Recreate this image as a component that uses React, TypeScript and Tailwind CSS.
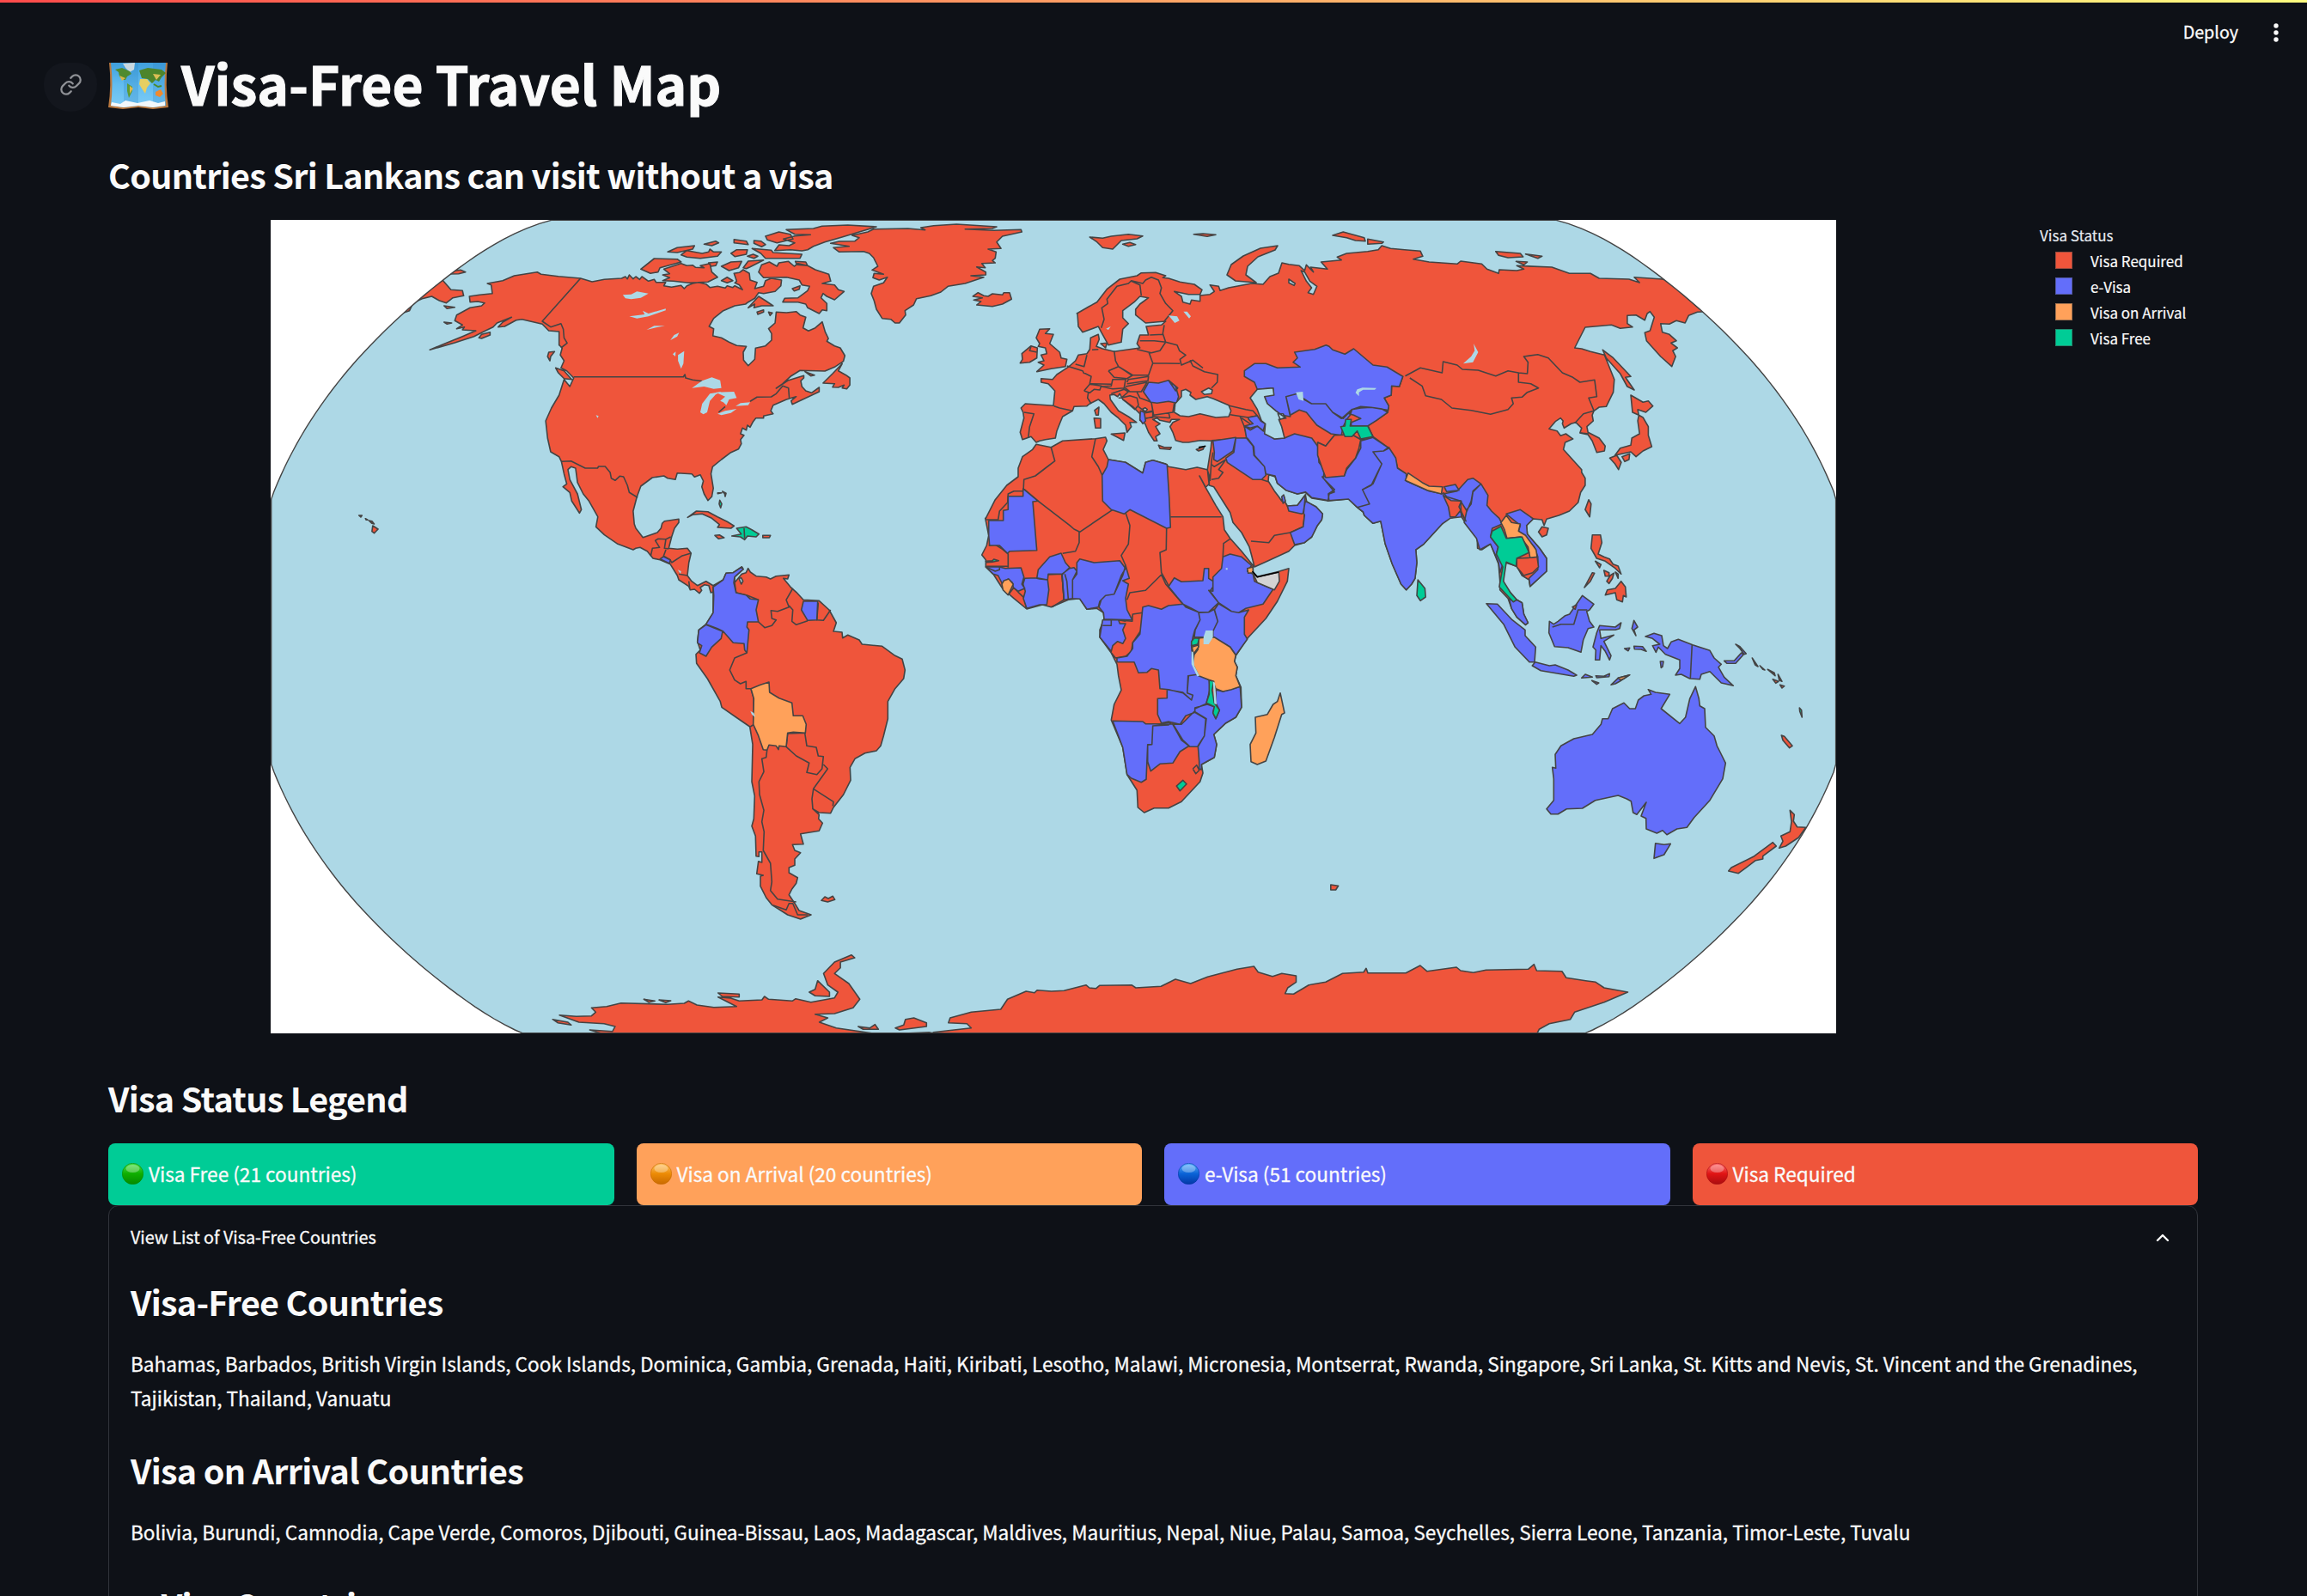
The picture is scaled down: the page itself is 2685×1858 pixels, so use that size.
import React from "react";
import { Link, ChevronUp } from "lucide-react";

type Frame = [number, number, number, number];

/* Tile frames: origin x, origin y, horizontal unit, vertical unit. */
const T = 1 / 3;
const frames: Record<string, Frame> = {
  A: [315, 250, 700 / 1568, T],
  B: [900, 250, T, T],
  C: [1130, 330, T, T],
  D: [1500, 250, 640 / 1568, T],
  E: [740, 560, T, T],
  F: [1130, 600, T, T],
  G: [1650, 560, T, T],
  H: [600, 1000, 1540 / 1568, T],
  P: [0, 0, 1, 1],
};

function project(src: string): string {
  const out: string[] = [];
  let f = frames.P;
  let x: number | null = null;
  for (const tok of src.split(/[\s,]+/)) {
    if (!tok) continue;
    if (frames[tok]) {
      f = frames[tok];
      continue;
    }
    const n = parseFloat(tok);
    if (x === null) x = n;
    else {
      out.push(`${(f[0] + x * f[2]).toFixed(1)} ${(f[1] + n * f[3]).toFixed(1)}`);
      x = null;
    }
  }
  return "M" + out.join("L");
}

/* Countries and coastlines grouped by visa status. */
const required: string[] = [
  // North and Central America
  "A 808,222 838,234 870,226 915,222 925,216 930,224 935,210 945,224 952,216 962,226 968,216 985,232 1000,226 1005,236 1030,236 1025,248 1045,253 1070,247 1078,258 1085,248 1100,240 1115,236 1135,242 1145,254 1165,250 1185,256 1190,248 1205,254 1210,248 1230,262 1222,245 1210,238 1215,232 1208,205 1222,202 1232,192 1248,205 1250,228 1268,236 1262,258 1285,250 1290,230 1305,222 1332,228 1330,248 1315,268 1285,275 1272,272 1262,292 1245,305 1238,312 1210,318 1180,335 1155,362 1143,390 1155,398 1153,423 1175,430 1195,445 1215,457 1240,460 1232,480 1233,508 1245,527 1262,505 1264,466 1290,458 1306,438 1306,415 1298,398 1315,378 1318,340 1345,342 1370,338 1380,350 1395,358 1388,395 1402,406 1420,395 1438,374 1446,410 1454,432 1450,442 1470,458 1485,465 1497,492 1493,512 1470,532 1445,546 1380,544 1355,565 1335,590 1318,606 1350,578 1390,562 1390,570 1382,580 1385,600 1395,615 1410,622 1430,603 1430,618 1360,662 1357,650 1370,635 1345,645 1310,665 1304,685 1310,695 1285,703 1285,710 1265,710 1258,722 1250,742 1243,735 1240,752 1230,745 1225,765 1234,770 1225,785 1227,800 1220,818 1200,830 1175,855 1152,880 1148,905 1154,955 1150,985 1140,998 1130,975 1124,950 1128,930 1120,908 1105,916 1098,905 1060,902 1055,925 1035,920 1025,912 995,918 965,948 955,985 945,1035 948,1080 E 0,165 25,197 75,180 88,165 92,148 100,140 150,133 150,145 135,165 125,195 115,235 145,238 180,235 193,252 185,285 180,330 195,350 215,365 245,350 270,365 305,345 275,385 262,390 255,365 240,362 225,372 230,382 222,392 205,378 190,380 185,368 150,345 145,330 120,290 85,275 60,270 40,245 15,232 0,235 A 945,1170 905,1150 870,1118 848,1090 853,1055 830,1000 815,975 800,935 795,885 783,880 775,890 780,925 800,975 810,1030 805,1042 785,1000 780,970 762,950 772,940 765,905 758,862 752,845 730,828 722,780 717,720 732,675 752,630 765,575 780,600 790,570 772,545 757,535 765,510 755,490 760,465 752,455 752,408 725,405 708,382 655,365 640,368 610,390 593,392 605,375 628,358 590,378 580,392 560,405 530,425 480,447 415,472 450,452 500,425 535,405 500,402 505,392 485,398 500,385 480,370 485,350 520,325 550,318 558,308 540,303 520,305 518,285 545,280 578,275 575,245 565,240 605,230 635,213 695,200 705,208 750,215 808,222",
  "A 1022,230 1040,220 1022,210 1040,206 1025,190 1070,170 1085,178 1100,176 1108,184 1130,185 1120,178 1145,170 1150,200 1165,218 1150,228 1140,235 1090,238 1050,232",
  "A 965,190 1000,153 1060,155 1070,165 1015,185 1010,200 990,205",
  "A 1070,140 1085,125 1125,135 1142,130 1145,120 1155,130 1175,130 1165,145 1120,152 1085,148",
  "A 1035,130 1060,115 1105,108 1100,120 1060,132",
  "A 1130,103 1160,92 1168,98 1150,108",
  "A 1208,86 1240,92 1245,104 1208,98",
  "A 1260,90 1278,92 1290,104 1280,112 1260,100",
  "A 1200,135 1215,122 1243,122 1240,138 1210,146",
  "A 1243,145 1258,138 1270,145 1260,152",
  "A 1255,118 1305,124 1310,132 1385,138 1380,152 1290,152 1278,135",
  "B 5,125 20,105 55,108 75,98 35,85 75,74 130,70 75,68 45,52 140,48 170,40 260,36 360,42 300,60 240,78 180,95 140,110 120,122 100,126 60,122",
  "A 1290,75 1325,60 1355,68 1362,85 1320,98 1295,88",
  "A 1175,180 1200,165 1228,163 1220,185 1195,195",
  "A 1232,185 1245,162 1285,158 1250,182 1240,188",
  "A 1175,230 1190,218 1205,230 1190,238",
  "A 1142,168 1165,165 1160,178 1148,180",
  "A 1272,200 1280,175 1300,165 1320,180 1325,168 1350,163 1365,180 1375,170 1400,178 1420,192 1455,208 1460,232 1438,240 1470,245 1480,262 1495,268 1470,297 1450,285 1440,275 1435,290 1450,310 1450,335 1438,332 1430,345 1400,325 1395,312 1375,305 1335,305 1340,292 1375,290 1400,265 1405,250 1385,245 1378,228 1345,218 1285,220",
  "A 1245,325 1272,285 1290,300 1310,318 1280,318 1260,325 1262,312",
  "A 1268,340 1285,332 1285,340 1270,348",
  "A 1298,340 1308,343 1302,352",
  "A 1360,258 1380,248 1378,260 1365,266",
  "A 1368,163 1395,165 1400,178 1372,175",
  "A 743,535 765,545 785,575 765,572 750,552",
  "A 725,480 740,478 730,495 728,510 722,495",
  "A 1440,588 1465,555 1490,520 1480,545 1500,560 1510,570 1510,595 1502,608 1490,605 1495,595 1480,603 1465,602 1470,590",
  "A 1393,548 1418,560 1408,563",
  "A 452,318 480,323 460,328",
  "A 452,375 472,378 460,382",
  "A 543,430 550,418 572,410 572,420 550,432",
  "A 448,228 470,262 500,265 503,283 475,290 458,308 440,300 420,285 395,293 375,305 330,305 400,230",
  "A 465,207 480,196 495,193 508,200 490,206",
  "A 340,345 350,335 358,325 368,318 362,335",
  "A 1087,1057 1110,1035 1140,1037 1165,1055 1190,1072 1208,1087 1200,1095 1165,1092 1170,1082 1150,1060 1125,1045 1100,1048",
  "A 1158,1120 1170,1118 1182,1128 1168,1132",
  "A 1283,1120 1303,1120 1300,1128 1283,1128",
  "A 266,1086 280,1098 270,1112 264,1106",
  "A 256,1068 264,1070 270,1080 264,1078",
  "A 230,1050 238,1050 235,1056",
  "A 247,1061 253,1066 249,1066",
  // South America
  "E 270,370 305,345 315,322 340,320 370,300 375,308 345,335 345,355 370,325 385,320 392,305 400,318 420,332 455,335 470,342 490,332 535,328 530,342 515,340 540,370 560,388 585,415 640,418 675,450 700,495 690,525 720,528 722,548 740,538 780,555 790,570 860,577 905,610 930,622 940,660 935,690 905,725 880,770 880,830 865,890 855,925 840,942 800,950 765,970 748,1000 750,1045 725,1095 690,1140 680,1160 640,1158 618,1145 640,1165 638,1180 652,1195 640,1222 575,1232 585,1268 547,1270 555,1290 575,1298 555,1320 555,1342 535,1350 535,1368 565,1385 560,1405 545,1425 535,1445 555,1475 570,1500 612,1515 575,1530 530,1515 475,1480 455,1455 435,1415 435,1380 445,1377 422,1372 428,1328 440,1332 440,1295 430,1295 430,1312 420,1310 418,1240 405,1205 412,1180 415,1100 405,1050 408,920 398,858 350,825 300,790 295,770 250,690 212,637 210,605 225,590 215,560 220,520 245,500 270,460 270,400",
  "E 648,1465 660,1452 672,1458 688,1450 695,1462 670,1470",
  // Greenland, Iceland and the Arctic islands
  "B 200,100 230,93 285,92 300,80 275,72 330,60 350,50 470,48 530,53 515,45 560,38 640,33 780,42 765,48 670,50 770,55 865,52 868,60 800,75 780,95 795,118 750,120 778,130 775,152 765,160 775,168 728,170 740,185 710,182 742,200 742,210 690,213 735,218 715,225 670,240 610,250 585,270 550,283 500,293 490,315 460,335 462,350 440,378 425,378 410,365 380,362 360,330 352,300 342,275 350,250 385,238 398,218 370,228 348,220 352,205 385,208 345,193 365,180 350,150 335,135 315,128 230,130 210,115 265,110",
  "B 697,285 715,272 735,283 750,285 765,276 800,280 805,272 825,272 832,295 800,312 765,320 710,315 725,303 700,298 730,290",
  "B 1105,78 1150,82 1180,75 1240,68 1290,74 1270,84 1215,90 1195,110 1185,120 1150,115 1130,95",
  "B 1220,103 1245,97 1265,104 1240,110",
  "B 1468,68 1500,66 1545,70 1515,76",
  "P 1428,320 1433,308 1447,298 1467,289 1487,286 1484,291 1464,299 1452,310 1450,320 1462,329 1438,327",
  "D 125,72 155,60 215,80 218,92 190,90 165,80",
  "D 225,85 270,95 265,100 225,103",
  "D 590,128 660,135 668,147 625,150 598,142",
  "D 675,137 722,145 710,152",
  "D 648,163 680,165 670,175",
  // Eurasia
  "B 1060,345 1100,322 1130,305 1165,260 1210,225 1270,213 1285,203 1335,202 1370,213 1360,220 1380,222 1420,235 1470,243 1497,262 1490,278 1450,278 1400,268 1425,285 1430,305 1455,312 1460,298 C 800,62 800,42 835,38 850,28 835,5 865,10 870,25 900,15 980,0 P 1470,331 1478,322 1488,318 1492,306 D 0,173 30,178 45,195 50,175 70,200 62,183 110,190 92,165 150,158 138,148 165,135 225,128 255,122 265,108 290,118 330,122 375,127 382,145 355,155 400,165 480,172 490,162 550,172 565,190 598,205 600,192 650,195 670,190 650,178 750,183 800,205 860,205 885,222 970,225 1000,237 985,218 1065,225 1120,240 1190,338 1165,340 1140,352 1130,378 1105,370 1085,382 1060,380 1065,410 1085,418 1105,440 1090,448 1108,465 1095,475 1103,495 1092,530 1060,495 1020,440 1015,412 1030,405 1042,358 1030,338 1022,345 1015,368 990,350 965,352 965,380 980,392 945,397 920,385 845,393 815,465 835,468 860,478 900,490 910,520 928,575 925,620 905,670 885,672 870,685 865,700 868,720 850,740 853,760 885,780 902,808 900,825 878,830 865,790 853,768 830,762 835,745 818,725 805,730 785,745 780,730 782,720 775,710 760,722 742,748 765,755 775,772 790,765 810,783 788,795 783,820 805,850 835,890 835,900 845,920 845,945 832,970 825,1005 800,1035 770,1050 735,1063 728,1085 722,1065 697,1062 678,1085 680,1115 715,1165 735,1200 735,1245 688,1298 685,1275 665,1260 650,1228 618,1215 610,1260 612,1290 632,1320 650,1345 665,1355 670,1395 682,1425 675,1432 650,1405 635,1375 625,1340 602,1310 602,1280 598,1220 575,1150 550,1170 538,1165 537,1130 520,1095 500,1070 490,1050 475,1055 440,1065 437,1080 385,1150 362,1170 365,1215 360,1270 350,1290 335,1310 320,1290 295,1220 275,1150 262,1070 240,1078 215,1050 212,1038 195,1022 170,993 110,1000 C 1250,760 1190,750 1168,730 1140,735 1100,722 1070,698 1062,675 1040,668 1038,690 1060,725 1075,745 1085,760 1092,740 1098,765 1105,777 1140,775 1168,738 1172,762 1205,780 1228,805 1225,825 1210,845 1190,885 1165,905 1130,915 1110,935 1035,970 990,990 980,950 972,920 945,870 915,835 905,800 870,745 848,710 832,705 826,650 838,575 840,550 800,548 760,555 740,555 715,548 705,520 695,500 705,485 728,475 700,475 695,485 660,478 650,470 635,475 660,490 645,500 660,525 645,535 650,550 640,550 620,520 608,490 590,478 590,455 565,430 530,405 520,385 512,395 500,388 485,390 487,405 515,445 550,465 578,485 555,485 560,500 545,520 540,495 515,470 490,450 465,420 445,405 415,420 405,428 360,430 355,445 320,465 310,490 300,515 295,540 260,545 240,550 228,555 210,535 180,545 172,520 185,470 182,450 175,435 190,420 288,427 293,375 270,350 245,345 245,332 285,335 300,318 335,295 345,288 365,270 375,250 405,245 415,230 418,190 445,178 448,195 438,220 460,228 500,238 590,225 580,210 590,180 620,180 612,150 665,145 680,132 610,138 575,110 575,90 590,72 620,50 590,45 570,65 530,95 530,120 550,140 530,160 525,205 480,215 455,170 445,150 390,170 375,150 372,105",
  "B 930,400 965,398 950,415 978,418 965,450 1000,480 1005,500 1025,505 1020,530 970,538 920,548 945,525 925,515 945,510 935,490 955,485 950,465 925,460 930,450 918,430",
  "B 862,518 870,505 868,485 900,458 922,465 920,500 895,515",
  "B 1120,710 1143,712 1143,745 1125,745",
  "B 1122,683 1137,672 1135,700 1127,700",
  "B 1180,766 1228,762 1223,788",
  "B 1345,805 1365,812 1390,812 1385,820 1350,817",
  "B 1143,450 1165,448 1160,465",
  "C 787,580 815,570 810,580 795,585",
  "D 998,700 1010,708 1025,740 1025,770 1035,810 1010,825 990,845 975,828 930,840 945,815 975,805 978,780 1000,765 995,720",
  "D 975,630 1010,655 1025,650 1038,668 1018,690 995,680 998,700 980,690",
  "D 915,850 935,840 948,865 940,890 930,870",
  "D 950,845 972,835 970,855 958,862",
  "D 895,472 925,500 975,565 960,568 985,612 965,600 945,555 905,500",
  "D 855,995 862,1010 858,1055 845,1030",
  "D 712,1108 722,1090 740,1095 735,1118 722,1125",
  "G 610,188 638,188 643,215 630,255 650,265 670,272 682,290 700,297 710,325 690,305 655,280 625,270 605,235",
  "G 620,280 640,292 635,303",
  "G 650,312 668,320 668,332 655,332",
  "G 660,350 672,330 685,322 680,340 668,358",
  "G 690,318 700,325 700,340",
  "G 610,320 617,322 603,350 582,372",
  "G 655,398 662,380 690,375 710,350 725,370 728,405 718,400 715,422 695,415 690,390",
  // Africa
  "C 228,562 280,572 320,550 435,542 470,537 475,550 462,580 480,615 540,625 600,662 610,625 635,617 680,630 690,640 750,650 790,642 825,650 832,670 832,700 820,712 798,672 815,705 855,775 880,815 885,860 905,890 945,935 985,985 985,1010 1000,1024 1070,1007 1110,995 1105,1040 1070,1110 1030,1170 965,1240 F 965,430 925,490 920,510 930,530 925,560 943,600 945,670 925,705 890,725 848,765 858,800 850,845 805,870 810,900 800,930 735,1000 690,1022 640,1022 605,1038 583,1020 580,960 545,905 530,810 490,715 500,660 525,610 515,560 510,520 490,480 450,425 450,400 465,360 463,340 440,325 405,328 380,290 340,295 280,320 250,312 195,327 150,290 110,255 78,205 52,180 52,155 38,138 55,105 62,70 50,10 C 52,820 85,755 125,705 165,675 165,645 180,605 215,580",
  // Pacific, Indian Ocean and New Zealand
  "G 1270,888 1280,892 1308,925 1298,932 1275,905",
  "G 1222,658 1245,670 1248,680",
  "G 1240,692 1260,700 1250,706",
  "G 1258,675 1272,700 1262,695",
  "G 1265,712 1280,716 1272,723",
  "G 1195,645 1212,660 1205,658",
  "G 1300,1150 1315,1165 1312,1188 1325,1208 1355,1210 1330,1245 1285,1275 1262,1282 1275,1258 1268,1240 1300,1225 1305,1190",
  "G 1240,1262 1252,1275 1205,1310 1205,1320 1180,1325 1120,1370 1085,1362 1095,1350 1175,1310",
  "H 966,90 975,94 972,108 966,108",
  // Antarctica
  "H 88,597 115,602 118,585 105,575 75,570 52,545 72,550 90,548 95,535 90,520 108,515 125,503 180,508 200,504 205,496 215,510 235,518 262,515 240,482 255,486 265,496 292,492 295,480 300,490 328,496 332,488 350,500 378,485 382,465 370,440 365,400 378,360 398,335 402,345 385,360 385,380 378,400 395,435 408,490 400,520 378,540 355,542 370,555 360,570 380,590 430,612 105,612",
  "H 495,605 540,590 535,575 513,572 515,555 540,535 575,525 583,490 605,462 615,467 618,458 635,462 650,460 676,440 680,450 688,452 692,442 730,440 735,450 765,445 782,420 800,435 820,412 855,385 875,375 880,395 897,410 908,400 925,408 925,430 915,450 912,470 922,472 940,440 960,430 980,400 1005,395 1008,382 1010,398 1055,398 1072,372 1080,392 1115,378 1120,390 1135,397 1150,388 1200,385 1207,368 1210,390 1240,392 1245,415 1268,425 1280,430 1290,450 1318,465 1290,500 1255,535 1250,560 1225,575 1213,595 1210,612 495,612",
  "H 450,590 460,580 462,560 472,555 487,572 487,585 455,597",
  "H 406,585 420,590 426,578 430,595 412,595",
  "H 348,465 355,455 358,425 372,465 372,480 355,478",
  "H 44,560 62,570 66,580 50,572",
  "H 240,468 265,472 265,482 245,480",
  "H 152,490 165,496 158,500",
  "H 170,492 184,495 178,502",
  "H 460,609 490,605 500,612",
];

const borders: string[] = [
  "A 808,222 708,372 730,392 757,380 763,400 765,430 773,448 757,465",
  "A 790,566 1076,566 1080,558 1082,570 1100,577 1130,582",
  "A 1250,652 1268,637 1305,636 1318,625 1335,598 1350,605 1352,640",
  "A 1168,690 1185,670",
  "A 758,862 783,860 820,885 852,885 855,879 872,879 885,900 888,920 898,928 910,913 920,915 930,945 935,970 957,988",
  "E 52,262 58,235 83,232 68,208 78,202 105,203 100,235 115,237",
  "E 105,203 122,195",
  "E 105,240 97,262 120,275 125,285 160,262 193,252",
  "E 150,325 180,330",
  "E 185,350 188,375",
  "E 388,600 345,618 328,660 345,695 365,708 385,700 385,725 402,725 412,760 412,850 400,858",
  "E 345,355 350,390 390,400 428,415",
  "E 428,492 450,512 475,505 490,485 475,480 472,452 495,455 535,440 525,415 548,375",
  "E 535,435 548,450 545,490 560,502 600,488",
  "E 637,425 632,485 655,487 680,450",
  "E 525,928 530,882 590,880 597,925 630,930 637,960 655,962 650,1005 632,1025 597,1018 605,985 560,960 525,928",
  "E 655,990 670,1005 620,1075 690,1120 688,1135",
  "E 620,1075 615,1110 618,1145",
  "E 458,940 455,965 440,970 447,1015 430,1050 432,1095 447,1150 440,1190 448,1225 445,1290 470,1335 475,1400 470,1430 495,1460 560,1470",
  "E 480,1482 525,1498 535,1475 548,1475 565,1515 600,1515",
  "C 280,572 293,620 260,645 225,672 185,685 182,745",
  "C 182,715 235,760 345,845 360,858 380,868 495,790",
  "C 52,825 95,825 100,795 128,765 130,735 150,725 182,725",
  "C 435,542 422,605 445,640 458,670 480,640",
  "C 697,815 875,815",
  "C 683,855 682,930 660,940 665,1010 690,1055",
  "C 540,800 555,845 550,910 525,950 540,985",
  "C 378,868 378,905 365,935 320,943",
  "F 62,105 85,102 110,118 130,135 130,182",
  "F 55,178 130,178",
  "F 268,207 318,205 325,295 283,320",
  "F 130,278 150,252 165,268 188,290 193,325",
  "F 540,370 515,365 563,370 565,345 600,340 595,400 565,445 560,475 540,492 505,498 490,480",
  "F 545,295 555,270 610,262 665,207 680,240 740,310",
  "F 880,145 882,98 905,82",
  "F 775,885 788,872 797,890 785,902 775,885",
  "B 1145,395 1155,365 1147,325 1168,310 1165,295 1200,250 1240,240 1250,230 1290,240 1300,228 1320,218 1345,228 1355,255 1350,275 1370,310 1395,335 1365,372",
  "B 1250,232 1280,245 1285,282",
  "B 1365,385 1360,415 1370,445 1410,455 1418,475 1440,490 1420,505 1425,525 1465,508 1500,535",
  "C 765,268 775,288 815,308 862,318 860,345 840,365",
  "B 1315,420 1362,418",
  "B 1280,440 1330,440 1370,445 1350,475 1320,482 1270,470",
  "B 1312,482 1325,518 1420,520",
  "B 1325,518 1310,560 1300,560 1250,560 1205,530 1195,510 1190,475",
  "B 1170,545 1205,530 1255,560 1235,572 1190,568 1170,545",
  "B 1080,550 1110,565 1105,590 1180,592",
  "B 1085,615 1105,592 1145,598 1140,612 1120,610 1105,622 1085,615",
  "B 1025,528 1080,545 1085,555",
  "B 1055,522 1085,530 1095,490",
  "B 1145,600 1180,598 1185,575 1230,575 1225,605 1185,608 1145,600",
  "B 1235,585 1240,575 1310,565 1308,580 1235,590",
  "B 1230,600 1305,585 1285,618 1245,618 1225,602",
  "B 1100,620 1097,640 1110,660",
  "B 1180,625 1225,610 1240,618 1215,640 1205,640",
  "B 1215,640 1245,632 1270,640 1275,665 1262,680 1225,648",
  "B 1270,620 1280,640 1320,655 1325,685 1300,690 1275,670",
  "B 1320,655 1328,700 1395,690 1400,658",
  "B 1298,692 1325,688 1325,708 1300,710",
  "B 1300,712 1330,705 1385,710",
  "B 1380,690 1385,710",
  "B 980,668 1000,675 1045,685",
  "B 875,690 910,695 895,740 890,780",
  "B 900,460 895,475 920,480",
  "B 1113,472 1135,470",
  "C 895,425 960,440 985,445 1000,462 968,468 905,458",
  "C 940,465 955,500 965,540 840,548",
  "C 945,470 975,490",
  "C 890,615 850,640 838,630",
  "C 890,615 865,650 880,660 865,680 840,685",
  "C 845,590 840,620 835,690",
  "C 1015,685 1038,692",
  "C 978,900 1040,905 1060,880 1115,870 1160,850 1165,808",
  "D 332,563 375,535 437,552 440,513 480,525 495,540 540,543 590,563 625,545 655,552 655,585 690,590 712,605 680,620 665,637 635,640 640,660 625,680 575,697 520,683 465,675 435,645 390,632 380,598 345,570",
  "D 655,552 680,555 682,515 670,495 710,488 740,500 780,552 810,568 830,585 872,577 878,635 855,640 870,685 840,695 815,728",
  "D 832,762 855,765",
  "D 82,795 105,808 130,770 180,768 205,785 245,780",
  "D 325,565 315,600 293,598 292,630 272,640 285,668 282,690 250,718 225,735 240,775 285,815 305,860 310,885 335,905",
];

const eVisa: string[] = [
  "C 62,828 113,828 113,793 130,790 130,743 182,743 182,717 235,760 216,762 230,932 135,935 128,943 100,915 65,915 62,880",
  "C 480,615 540,625 600,662 610,625 635,617 685,632 692,745 697,852 683,855 555,790 535,805 490,790 460,760 458,670 475,640",
  "F 52,180 100,180 120,185 175,183 185,215 178,240 188,255 165,265 148,252 145,235 130,222 110,240 95,210 78,205",
  "F 188,220 230,218 268,225 272,260 265,312 240,312 195,325 183,290 190,265 182,240",
  "F 230,220 235,190 275,145 315,132 330,165 345,182 320,205 270,205 268,225 240,222",
  "F 318,205 345,185 360,182 370,195 355,225 355,290 325,295",
  "F 370,165 380,152 430,165 520,158 540,185 525,210 500,275 470,280 450,300 445,320 405,328 380,292 355,290 355,225 370,205",
  "F 540,175 553,220 530,228 550,240 540,290 545,330 563,365 465,362 463,340 447,320 455,295 470,280 500,275 530,210",
  "F 460,365 515,365 520,378 540,378 530,400 540,430 530,448 512,440 495,455 490,475 450,425",
  "F 600,320 620,315 665,328 690,315 740,310 770,325 795,338 800,365 782,400 775,425 770,455 775,520 795,555 760,560 755,620 775,628 770,645 740,620 690,608 660,605 655,540 630,535 615,548 585,550 570,512 510,512 510,498 545,492 565,465 565,445 590,415",
  "F 690,248 710,218 735,232 810,228 815,185 830,185 830,220 845,230 845,265 830,262 865,305 830,338 795,338 750,320 720,285",
  "F 880,145 905,135 945,145 980,175 965,195 985,205 990,230 1055,258 1020,310 960,325 935,340 910,335 865,305 835,265 845,250 845,215 875,185",
  "F 795,340 830,338 850,328 862,370 845,405 830,425 780,425 783,400 800,365",
  "F 865,308 910,335 935,340 970,330 955,355 955,415 965,432 925,488 905,460 845,425 845,405 862,370 850,330",
  "F 795,555 832,575 835,605 822,658 782,675 782,688 750,700 730,730 690,720 665,725 652,695 652,640 685,638 685,608 740,618 770,645 775,628 755,620 758,560",
  "F 880,615 940,598 945,670 925,705 890,725 848,765 858,800 850,845 805,870 805,888 797,885 797,860 793,805 815,770 820,710 782,688 782,672 825,660 850,668 845,690 855,710 868,680 855,655 855,610",
  "F 705,730 735,730 780,685 822,710 815,770 793,808 765,808 735,785",
  "F 635,735 705,728 740,785 762,805 730,825 705,865 660,868 628,893 617,860 617,800 632,800",
  "F 495,718 600,720 610,728 665,728 700,722 690,732 635,735 632,800 617,802 612,922 595,932 560,918 545,905 530,810",
  "C 845,550 925,538 915,585 860,622 848,615 850,590",
  "C 925,540 965,540 988,570 990,600 1025,640 1030,670 1015,685 985,685 895,625 890,610 918,590",
  "C 955,498 975,512 1000,498 1028,520 1060,543 1095,540 1130,525 1190,540 1212,570 1215,625 1235,650 1230,680 1270,720 1248,735 1250,758 1190,748 1168,728 1140,735 1100,722 1070,698 1062,672 1030,665 1025,640 988,600 985,568 962,540",
  "C 968,468 1000,462 1012,480 1028,490 1020,515 1000,498 975,505 955,498 985,490 970,475",
  "C 1105,777 1140,775 1168,738 1162,800 1155,805 1110,795",
  "C 1168,760 1205,780 1228,805 1225,825 1210,845 1190,885 1165,905 1130,912 1115,870 1160,850 1165,808 1160,800",
  "C 1085,745 1092,738 1098,760 1090,768",
  "C 955,305 990,280 1030,280 1070,295 1150,292 1125,275 1140,260 1130,240 1200,230 1240,215 D 115,460 125,472 160,487 185,468 240,525 280,532 325,565 315,600 293,598 292,630 272,640 285,668 282,690 265,678 235,673 205,675 180,680 155,712 125,690 105,660 65,660 30,635 C 1140,385 1100,395 1115,465 1085,460 1065,445 1035,420 1025,395 1055,388 1055,365 1000,370 990,345 955,325",
  "C 1100,395 1140,385 D 40,640 65,660 105,660 125,690 150,712 180,680 175,700 165,715 155,740 150,770 120,765 80,735 50,690 30,682 C 1115,460",
  "D 180,680 205,670 235,673 280,682 280,692 250,718 225,738 178,738 178,725 205,712 185,700 172,695",
  "D 240,778 285,815 270,825 240,828 265,870 240,940 210,960 230,1010 195,1022 170,993 112,998 115,975 130,968 95,915 158,912 165,890 190,850 205,815 205,790",
  "D 285,812 305,850 310,885 335,905 335,930 400,965 440,975 480,965 510,925 525,920 548,940 525,965 520,1000 508,1035 490,1000 492,1055 460,1060 437,1080 385,1150 362,1170 365,1215 360,1270 350,1290 335,1310 320,1290 295,1220 275,1150 262,1070 240,1078 215,1050 212,1038 195,1022 230,1010 210,960 235,945 265,870 240,828 270,825",
  "D 443,950 475,942 485,962 450,967",
  "D 548,940 568,980 565,1015 578,1035 600,1060 608,1080 580,1095 575,1125 597,1160 592,1185 610,1220 602,1250 598,1215 575,1150 545,1170 535,1130 500,1075 508,1030 520,1010 525,968",
  "D 620,1045 660,1030 697,1062 678,1085 680,1115 715,1165 735,1200 735,1245 688,1298 685,1270 710,1240 710,1195 700,1160 655,1105 660,1085",
  "D 628,1340 640,1350 650,1345 665,1355 670,1395 682,1425 675,1432 650,1405 635,1375",
  "B 1310,585 1345,588 1380,578 1405,600 1415,635 1408,658 1380,652 1340,658 1318,655 1292,618",
  "B 1380,578 1412,605 1405,615",
  "B 1282,685 1295,690 1300,720 1290,730 1280,715",
  "E 270,370 305,345 315,322 340,320 370,300 375,308 345,335 342,355 350,390 385,398 400,412 428,415 420,450 428,492 390,492 388,510 395,520 388,600 380,590 378,568 340,565 305,525 285,515 245,500 270,460 272,400",
  "E 245,502 303,525 298,550 265,580 245,612 222,600 230,575 215,565 220,520",
  "E 585,420 635,420 632,485 600,487 578,450",
  "E 85,272 97,264 120,275 118,288",
  "G 240,428 278,430 330,485 375,520 375,540 412,580 408,632 390,632 340,580 300,500",
  "G 400,645 410,632 460,645 480,642 525,660 555,678 545,682 430,662",
  "G 460,490 475,500 490,490 515,470 530,465 575,400 615,430 600,450 590,455 600,490 615,510 595,515 578,555 570,598 525,582 478,578 458,530",
  "G 635,505 690,510 710,495 705,515 690,520 635,520 640,550 685,538 650,560 665,590 675,610 670,625 655,595 640,575 635,625 620,625 622,590 612,580 625,530",
  "G 755,487 768,510 755,520 762,540 748,515",
  "G 722,585 740,583 735,593",
  "G 755,577 785,578 798,595 780,588 757,587",
  "G 572,688 585,675 610,685",
  "G 622,680 650,682 670,673 668,683 625,687",
  "G 608,697 632,705 625,710",
  "G 675,712 700,688 740,677 705,700 690,708",
  "G 847,630 858,630 855,648 850,652",
  "G 795,543 825,532 852,540 858,575 872,585 885,562 910,553 960,572 1020,592 1035,618 1060,640 1050,650 1070,685 1102,715 1060,705 1020,665 990,675 985,692 950,690 920,675 900,678 915,655 915,625 865,605 840,580 832,598 820,575 845,570 820,550",
  "G 1070,628 1105,628 1130,600 1137,607 1110,637 1080,637",
  "G 1110,570 1125,578 1147,603 1140,605 1125,585",
  "G 1168,618 1188,648 1178,642",
  "G 970,718 982,760 985,785 1002,795 1005,860 1035,890 1045,925 1055,945 1075,985 1065,1040 1020,1115 965,1175 940,1210 905,1215 870,1235 855,1220 835,1230 798,1215 797,1178 780,1170 798,1122 765,1165 752,1158 745,1118 730,1110 700,1098 620,1115 575,1143 520,1145 490,1163 465,1163 450,1145 475,1115 475,1040 470,1000 482,1003 480,955 500,925 545,900 610,885 640,850 645,830 665,830 680,795 720,775 740,795 760,795 770,765 790,750 815,745 805,728 830,738 880,745 850,795 915,847 935,825 950,760",
  "G 830,1265 860,1270 883,1267 860,1305 825,1318",
];

const arrival: string[] = [
  "F 795,428 850,425 905,460 925,488 920,510 930,530 925,560 940,598 910,608 880,615 855,605 845,580 795,560 775,520 780,480 795,460",
  "F 772,460 795,452 793,468 778,488",
  "F 108,240 115,228 132,222 148,240 130,278 112,260",
  "F 965,185 985,180 985,200 968,202",
  "F 1080,620 1095,690 1085,695 1060,775 1030,858 1000,870 978,860 975,800 995,760 993,705 1035,695 1055,660 1070,650",
  "D 340,902 380,935 400,948 438,950 435,975 395,962 332,928",
  "D 605,1075 620,1050 635,1075 660,1080 655,1105 675,1120 705,1170 708,1195 688,1198 682,1160 660,1125 622,1130 615,1100",
  "E 402,725 435,712 465,702 467,738 500,758 545,775 550,820 583,820 595,850 592,880 550,877 530,880 525,928 500,925 498,938 490,925 465,922 458,940 445,938 428,890 410,850 412,760",
  "G 700,688 740,677 720,690 708,695",
];

const visaFree: string[] = [
  "F 770,440 780,428 797,430 792,450 770,455",
  "F 832,575 848,580 842,610 850,655 868,680 855,710 845,690 850,668 822,655 832,625",
  "F 718,945 740,925 753,938 730,962",
  "F 52,160 75,158 80,153 97,158 75,163 55,164",
  "D 148,740 160,738 162,715 178,715 175,738 225,738 240,775 205,783 195,755 180,775 160,775",
  "D 580,1105 605,1088 620,1130 665,1125 685,1180 650,1200 648,1228 620,1213 612,1280 632,1320 650,1345 640,1352 600,1300 610,1230 592,1185 597,1160 575,1125",
  "D 368,1275 388,1305 390,1335 375,1348 365,1330",
  "E 352,165 385,160 405,170 430,185 420,195 390,192 380,205 365,195 335,192 368,185",
  "E 286,41 300,41 286,44",
  "E 302,36 315,43 312,54 310,44",
  "E 293,67 300,80 296,94 291,80",
  "G 1333,792 1340,800 1342,825 1334,805",
];

const seas: string[] = [
  "C 975,400 1000,370 1055,365 1058,390 1025,395 1035,420 1065,445 1085,460 1100,470 1075,475 1085,500 1095,540 1060,543 1025,525 1028,490 1015,480 1000,440 985,415",
  "C 735,375 750,370 768,380 765,390 785,405 825,395 845,402 900,425 908,445 900,465 855,468 800,455 760,465 730,462 710,450 713,420 735,395",
  "C 805,378 830,365 843,372 840,385 815,388",
  "E 360,340 368,338 374,350 368,360",
  "C 1072,455 1090,455 1098,468 1080,475",
  "D 35,195 45,200 60,232 80,250 70,278 55,272 65,255 50,232",
  "D 0,225 18,240 15,247 0,238",
];

const lateBorders: string[] = [
  "F 460,385 490,385 490,365",
  "F 328,205 335,230 340,292",
  "F 318,205 325,295",
  "G 470,510 500,500 545,500 560,450 592,450",
  "G 958,572 952,690",
  "E 378,165 380,200",
  "D 440,970 450,985 490,1000",
  "F 52,180 85,195 100,190 100,180",
];

const lateRequired: string[] = [
  "D 440,980 462,998 492,1000 485,1020 505,1070 488,1035 475,1055 460,1055 455,1020",
  "D 650,1200 688,1198 708,1195 712,1230 695,1250 670,1260 650,1230",
  "D 82,795 105,808 130,770 180,768 205,785 200,815 190,850 165,885 158,912 105,918 95,885 82,840",
  "G 540,440 555,432 550,448",
];

const lakes: string[] = [
  "A 918,280 940,278 955,268 985,275 965,290 940,295 925,292",
  "A 935,355 975,348 970,335 985,345 1030,328 1030,334 985,355 955,362",
  "A 980,402 1000,388 1028,388 1005,394",
  "A 1042,438 1052,420 1065,412 1060,425",
  "A 1062,490 1078,476 1076,520 1070,538 1062,510",
  "A 1048,487 1056,478 1055,495",
  "A 1098,605 1125,580 1150,568 1172,578 1175,605 1155,608 1130,600",
  "A 1120,690 1125,660 1145,625 1175,618 1160,628 1145,650 1138,690 1128,697",
  "A 1160,620 1208,618 1215,640 1195,645 1188,665 1180,655 1172,650 1185,635",
  "A 1165,695 1185,685 1215,678 1200,692 1175,700",
  "A 1212,668 1225,658 1250,655 1245,665",
  "A 848,700 855,703 852,710",
  "D 527,450 540,480 525,515 497,520 520,495 530,475",
  "D 190,622 195,610 210,604 250,605 245,611 212,611 200,620 200,634",
  "D 20,620 40,618 42,650 28,645",
  "C 690,112 720,115 728,130 712,138",
  "C 742,98 755,98 768,115 762,122",
  "C 472,158 488,150 480,162",
  "F 812,425 820,402 845,402 845,425 830,450 812,450",
  "F 770,475 776,478 780,525 798,560 790,562 770,520",
  "F 845,580 852,585 858,660 850,658",
  "F 890,184 896,184 896,190 890,190",
  "E 400,803 412,810 417,825 405,815",
  "E 146,310 158,315 156,324",
];

/* Outline of the globe in the Natural Earth projection. */
const globe = (() => {
  const side: [number, number][] = [];
  for (let i = 0; i <= 120; i++) {
    const p = -Math.PI / 2 + (Math.PI * i) / 120;
    const p2 = p * p;
    const p4 = p2 * p2;
    const x = Math.PI * (0.8707 - 0.131979 * p2 + p4 * (-0.013791 + p4 * (0.003971 * p2 - 0.001529 * p4)));
    const y = p * (1.007226 + p2 * (0.015085 + p4 * (-0.044475 + 0.028874 * p2 - 0.005916 * p4)));
    side.push([x * 343.6, 735.4 + y * 343.6]);
  }
  const fit = (v: number, lo: number, hi: number) => Math.max(lo, Math.min(hi, v)).toFixed(1);
  const right = side.map(([x, y]) => `${fit(1226.5 + x, 315.7, 2136.6)} ${fit(y, 200, 1260)}`);
  const left = [...side].reverse().map(([x, y]) => `${fit(1226.5 - x, 315.7, 2136.6)} ${fit(y, 200, 1260)}`);
  return "M" + [...right, ...left].join("L") + "Z";
})();

function Shapes({ items, fill, stroke = "#444444" }: { items: string[]; fill: string; stroke?: string }) {
  return (
    <path
      d={items.map((s) => project(s) + (fill === "none" ? "" : "Z")).join("")}
      fill={fill}
      stroke={stroke}
      strokeWidth={1.6}
      strokeLinejoin="round"
    />
  );
}

function WorldMap() {
  return (
    <svg viewBox="315 256 1822 947" className="block h-[947px] w-[1822px] bg-white">
      <defs>
        <clipPath id="globe">
          <path d={globe} />
        </clipPath>
      </defs>
      <path d={globe} fill="#add8e6" />
      <g clipPath="url(#globe)">
        <Shapes items={required} fill="#ef553b" />
        <Shapes items={borders} fill="none" />
        <Shapes items={eVisa} fill="#636efa" />
        <Shapes items={lateRequired} fill="#ef553b" />
        <Shapes items={arrival} fill="#ffa15a" />
        <Shapes items={visaFree} fill="#00cc96" />
        <Shapes items={["F 983,198 1000,215 1075,198 1077,230 1060,260 1000,235", "B 1290,678 1298,674 1306,680 1298,688"]} fill="#d3d3d3" />
        <Shapes items={seas} fill="#add8e6" />
        <Shapes items={lateBorders} fill="none" />
        <Shapes items={lakes} fill="#add8e6" stroke="none" />
        <Shapes items={["F 983,195 1000,215 1075,198", "C 795,572 820,568"]} fill="none" stroke="#000000" />
        <path d="M300 256.5H2150M300 1202.5H2150" stroke="#444444" strokeWidth={1} />
      </g>
      <path d={globe} fill="none" stroke="#444444" strokeWidth={1.4} />
    </svg>
  );
}

function MapEmoji() {
  return (
    <svg viewBox="0 0 70 55" className="h-[55px] w-[70px] shrink-0">
      <defs>
        <linearGradient id="paper" x1="0" x2="0" y1="0" y2="1">
          <stop offset="0" stopColor="#3f9fdc" />
          <stop offset="0.5" stopColor="#63bdf0" />
          <stop offset="1" stopColor="#7dcbf5" />
        </linearGradient>
      </defs>
      <path d="M1 0L18 1 34 0 52 1 69 0Q66 26 70 52L52 54 35 52 17 54 0 52Q4 26 1 0Z" fill="#b9783f" />
      <path d="M3 0H67Q64 25 67 50L52 52 35 50 18 52 3 50Q6 25 3 0Z" fill="url(#paper)" />
      <path d="M18 0V52L35 50V0ZM52 0V52L67 50Q64 25 67 0Z" fill="#2f86c6" opacity="0.28" />
      <path d="M4 46L14 48 20 44 34 47 48 44 58 47 66 45V50L52 52 35 50 18 52 3 50Z" fill="#f2f7fa" />
      <path d="M17 1L31 0 30 8 25 11 20 6Z" fill="#c9d8df" />
      <path d="M8 8L16 6 25 10 27 13 22 16 20 20 17 20 13 16 12 11Z" fill="#4f8a2e" />
      <path d="M13 15L20 18 16 21Z" fill="#d9b64a" />
      <path d="M22 24L28 28 28 33 24 41 22 33Z" fill="#5b9a35" />
      <path d="M25 27L29 30 25 36Z" fill="#e0b94c" />
      <path d="M36 9L46 6 62 8 67 12 62 17 59 22 55 20 51 24 46 19 39 18Z" fill="#4d852b" />
      <path d="M37 19L45 19 49 24 45 29 43 36 39 30 36 25Z" fill="#e5cf61" />
      <path d="M52 13L61 14 56 20Z" fill="#dcbf55" />
      <path d="M55 34L61 31 64 36 60 40 55 38Z" fill="#ef8a2f" />
      <path d="M53 25L58 28 62 27" stroke="#4b8a2a" strokeWidth="2" fill="none" />
    </svg>
  );
}

function Ball({ id, top, mid, low }: { id: string; top: string; mid: string; low: string }) {
  return (
    <svg viewBox="0 0 25 25" className="h-[25px] w-[25px] shrink-0">
      <defs>
        <linearGradient id={id} x1="0" x2="0" y1="0" y2="1">
          <stop offset="0" stopColor={top} />
          <stop offset="0.5" stopColor={mid} />
          <stop offset="1" stopColor={low} />
        </linearGradient>
      </defs>
      <circle cx="12.5" cy="12.5" r="12.2" fill={`url(#${id})`} stroke={low} strokeWidth="0.6" />
      <ellipse cx="12.5" cy="6.5" rx="8" ry="4.6" fill="#ffffff" opacity="0.3" />
    </svg>
  );
}

const legend = [
  { label: "Visa Required", swatch: "bg-[#ef553b]" },
  { label: "e-Visa", swatch: "bg-[#636efa]" },
  { label: "Visa on Arrival", swatch: "bg-[#ffa15a]" },
  { label: "Visa Free", swatch: "bg-[#00cc96]" },
];

const cards = [
  { label: "Visa Free (21 countries)", bg: "bg-[#00cc96]", top: "#4be04b", mid: "#0fae00", low: "#058a00" },
  { label: "Visa on Arrival (20 countries)", bg: "bg-[#ffa15a]", top: "#ffc46a", mid: "#ec8b06", low: "#c96a00" },
  { label: "e-Visa (51 countries)", bg: "bg-[#636efa]", top: "#5fb4ff", mid: "#0a62d6", low: "#0338a6" },
  { label: "Visa Required", bg: "bg-[#ef553b]", top: "#ff7070", mid: "#e01414", low: "#a90d10" },
];

const heading = "text-[39.5px] leading-[52px] font-bold tracking-[-0.72px] whitespace-nowrap";
const body = "text-[22.62px] leading-[40px] whitespace-nowrap [-webkit-text-stroke:0.3px]";

export default function App() {
  return (
    <div className="flex h-[1858px] w-[2685px] flex-col overflow-hidden bg-[#0e1117] font-['Noto_Sans_CJK_SC','Noto_Sans',sans-serif] text-[#fafafa]">
      <div className="h-[3px] shrink-0 bg-[linear-gradient(90deg,#ff4b4b,#fffd80)]" />
      <header className="flex h-[70px] shrink-0 items-start justify-end pr-[31px]">
        <span className="text-[19.7px] leading-[68px] [-webkit-text-stroke:0.3px]">Deploy</span>
        <svg viewBox="0 0 10 24" className="mt-[23px] ml-[39px] h-[24px] w-[10px]" fill="#fafafa">
          <circle cx="5" cy="4" r="2.7" />
          <circle cx="5" cy="12" r="2.7" />
          <circle cx="5" cy="20" r="2.7" />
        </svg>
      </header>

      <div className="flex h-[57px] shrink-0 pl-[51px]">
        <div className="flex h-[57px] w-[62px] items-start justify-center rounded-t-[24px] rounded-b-[31px] bg-[#13161d] pt-[12px]">
          <Link className="h-[27px] w-[27px] text-[#8f9196]" strokeWidth={2} />
        </div>
        <div className="ml-[13px] flex h-[57px] items-start">
          <MapEmoji />
          <h1 className="ml-[15px] text-[62.2px] leading-[46px] font-bold whitespace-nowrap [-webkit-text-stroke:1px]">Visa-Free Travel Map</h1>
        </div>
      </div>

      <main className="ml-[126px] flex w-[2432px] flex-col">
        <h2 className={`mt-[47px] ${heading}`}>Countries Sri Lankans can visit without a visa</h2>

        <div className="mt-[27px] flex pl-[189px]">
          <WorldMap />
          <div className="ml-[237px] pt-[4px]">
            <div className="text-[17px] leading-[28px] text-[#e6eaf1] [-webkit-text-stroke:0.2px]">Visa Status</div>
            <ul className="pl-[18px]">
              {legend.map((l) => (
                <li key={l.label} className="flex h-[30px] items-center text-[17px] whitespace-nowrap [-webkit-text-stroke:0.2px]">
                  <span className={`mr-[21px] h-[20px] w-[20px] border border-[#444444]/50 ${l.swatch}`} />
                  <span className="pt-[2px]">{l.label}</span>
                </li>
              ))}
            </ul>
          </div>
        </div>

        <h2 className={`mt-[49px] ${heading}`}>Visa Status Legend</h2>

        <div className="mt-[27px] grid grid-cols-4 gap-[26px]">
          {cards.map((c, i) => (
            <div key={c.label} className={`flex h-[72px] items-center rounded-[8px] pb-[1px] pl-[16px] ${body} ${c.bg}`}>
              <Ball id={`ball${i}`} top={c.top} mid={c.mid} low={c.low} />
              <span className="ml-[6px]">{c.label}</span>
            </div>
          ))}
        </div>

        <section className="h-[600px] rounded-t-[12px] border border-[#31343b] px-[25px]">
          <div className="flex h-[73px] items-center justify-between">
            <span className="pb-[2px] text-[19.8px] [-webkit-text-stroke:0.3px]">View List of Visa-Free Countries</span>
            <ChevronUp className="mr-[3px] h-[24px] w-[24px]" strokeWidth={2.4} />
          </div>
          <h2 className={`mt-[12px] ${heading}`}>Visa-Free Countries</h2>
          <p className={`mt-[27px] ${body}`}>
            Bahamas, Barbados, British Virgin Islands, Cook Islands, Dominica, Gambia, Grenada, Haiti, Kiribati, Lesotho, Malawi, Micronesia, Montserrat, Rwanda, Singapore, Sri Lanka, St. Kitts and Nevis, St. Vincent and the Grenadines,
            <br />
            Tajikistan, Thailand, Vanuatu
          </p>
          <h2 className={`mt-[37px] ${heading}`}>Visa on Arrival Countries</h2>
          <p className={`mt-[27px] ${body}`}>
            Bolivia, Burundi, Camnodia, Cape Verde, Comoros, Djibouti, Guinea-Bissau, Laos, Madagascar, Maldives, Mauritius, Nepal, Niue, Palau, Samoa, Seychelles, Sierra Leone, Tanzania, Timor-Leste, Tuvalu
          </p>
          <h2 className={`mt-[38px] ${heading}`}>e-Visa Countries</h2>
        </section>
      </main>
    </div>
  );
}
